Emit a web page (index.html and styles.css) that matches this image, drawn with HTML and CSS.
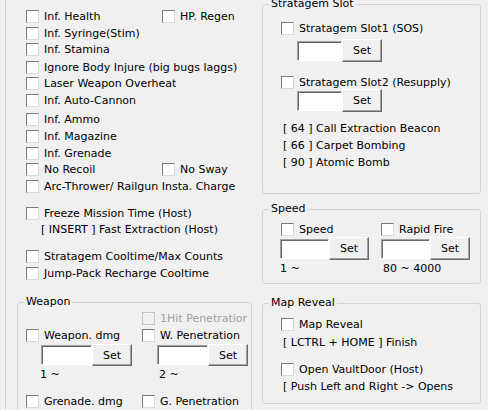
FILE: index.html
```html
<!DOCTYPE html>
<html>
<head>
<meta charset="utf-8">
<link rel="stylesheet" href="styles.css">
</head>
<body>
<div class="dialog">
  <div class="left">
    <div class="rows">
      <div class="row two"><label class="cb"><span class="box"></span>Inf. Health</label><label class="cb"><span class="box"></span>HP. Regen</label></div>
      <div class="row"><label class="cb"><span class="box"></span>Inf. Syringe(Stim)</label></div>
      <div class="row m-1"><label class="cb"><span class="box"></span>Inf. Stamina</label></div>
      <div class="row m1"><label class="cb"><span class="box"></span>Ignore Body Injure (big bugs laggs)</label></div>
      <div class="row m-1"><label class="cb"><span class="box"></span>Laser Weapon Overheat</label></div>
      <div class="row"><label class="cb"><span class="box"></span>Inf. Auto-Cannon</label></div>
      <div class="row m2"><label class="cb"><span class="box"></span>Inf. Ammo</label></div>
      <div class="row"><label class="cb"><span class="box"></span>Inf. Magazine</label></div>
      <div class="row"><label class="cb"><span class="box"></span>Inf. Grenade</label></div>
      <div class="row m-1 two"><label class="cb"><span class="box"></span>No Recoil</label><label class="cb"><span class="box"></span>No Sway</label></div>
      <div class="row"><label class="cb"><span class="box"></span>Arc-Thrower/ Railgun Insta. Charge</label></div>
      <div class="row m10"><label class="cb"><span class="box"></span>Freeze Mission Time (Host)</label></div>
      <div class="row m-1 note-l">[ INSERT ] Fast Extraction (Host)</div>
      <div class="row m10"><label class="cb"><span class="box"></span>Stratagem Cooltime/Max Counts</label></div>
      <div class="row"><label class="cb"><span class="box"></span>Jump-Pack Recharge Cooltime</label></div>
    </div>
    <div class="group weapon">
      <span class="gtitle">Weapon</span>
      <div class="row two"><span class="cell"></span><label class="cb dis clip105"><span class="box"></span>1Hit Penetration</label></div>
      <div class="row two"><label class="cb"><span class="box"></span>Weapon. dmg</label><label class="cb clip100"><span class="box"></span>W. Penetration</label></div>
      <div class="erow two">
        <span class="cell ecell"><span class="edit w51"></span><span class="btn h22">Set</span></span>
        <span class="cell ecell"><span class="edit w51"></span><span class="btn h22">Set</span></span>
      </div>
      <div class="row two"><span class="cell hint1">1 ~</span><span class="cell hint2">2 ~</span></div>
      <div class="row m10 two"><label class="cb"><span class="box"></span>Grenade. dmg</label><label class="cb"><span class="box"></span>G. Penetration</label></div>
    </div>
  </div>

  <div class="right">
    <div class="group strat">
      <span class="gtitle">Stratagem Slot</span>
      <div class="row"><label class="cb"><span class="box"></span>Stratagem Slot1 (SOS)</label></div>
      <div class="erow s-e1"><span class="edit w45"></span><span class="btn">Set</span></div>
      <div class="row s-c2"><label class="cb"><span class="box"></span>Stratagem Slot2 (Resupply)</label></div>
      <div class="erow s-e2"><span class="edit w45"></span><span class="btn">Set</span></div>
      <div class="row s-t1 note">[ 64 ] Call Extraction Beacon</div>
      <div class="row note">[ 66 ] Carpet Bombing</div>
      <div class="row note">[ 90 ] Atomic Bomb</div>
    </div>

    <div class="group speed">
      <span class="gtitle">Speed</span>
      <div class="row"><label class="cb sp1"><span class="box"></span>Speed</label><label class="cb"><span class="box"></span>Rapid Fire</label></div>
      <div class="erow sp-e"><span class="sp1 ecell"><span class="edit w49"></span><span class="btn">Set</span></span><span class="ecell"><span class="edit w49"></span><span class="btn">Set</span></span></div>
      <div class="trow"><span class="sp1">1 ~</span><span class="hint3">80 ~ 4000</span></div>
    </div>

    <div class="group map">
      <span class="gtitle">Map Reveal</span>
      <div class="row"><label class="cb"><span class="box"></span>Map Reveal</label></div>
      <div class="row m1 note">[ LCTRL + HOME ] Finish</div>
      <div class="row m10"><label class="cb"><span class="box"></span>Open VaultDoor (Host)</label></div>
      <div class="row note">[ Push Left and Right -&gt; Opens</div>
    </div>
  </div>
</div>
</body>
</html>
```

FILE: styles.css
```css
html, body {
  margin: 0;
  padding: 0;
  background: #f0f0f0;
}
body {
  font-family: "DejaVu Sans", "Noto Sans", sans-serif;
  font-size: 11px;
  line-height: 13px;
  color: #000;
  width: 488px;
  height: 410px;
  overflow: hidden;
}
.dialog {
  display: flex;
  height: 410px;
}
.left {
  flex: none;
  box-sizing: border-box;
  width: 251px;
  margin-left: 5px;
  border-left: 1px solid #d5d5d5;
  padding: 8px 0 0 11px;
}
.rows {
  padding-left: 9px;
}
.row {
  display: flex;
  align-items: center;
  height: 17px;
  white-space: nowrap;
}
.m-1 { margin-top: -1px; }
.m1 { margin-top: 1px; }
.m2 { margin-top: 2px; }
.m10 { margin-top: 10px; }
.two > :first-child {
  flex: none;
  width: 116px;
}
.rows .two > :first-child {
  width: 136px;
}
.cb {
  display: flex;
  align-items: center;
  white-space: nowrap;
  overflow: hidden;
}
.box {
  flex: none;
  box-sizing: border-box;
  width: 13px;
  height: 13px;
  margin-right: 5px;
  background: #fff;
  border: 1px solid;
  border-color: #7a7a7a #dadada #dadada #7a7a7a;
}
.dis {
  color: #a0a0a0;
}
.dis .box {
  background: #f0f0f0;
  border-color: #c4c4c4;
}
.clip100 { width: 100px; }
.clip105 { width: 105px; }
.note-l {
  padding-left: 15px;
}
.note {
  padding-left: 2px;
}

.group {
  position: relative;
  box-sizing: border-box;
  border: 1px solid #d5d5d5;
  border-radius: 3px;
}
.gtitle {
  position: absolute;
  top: -8px;
  left: 6px;
  padding: 0 2px;
  background: #f0f0f0;
  white-space: nowrap;
}

.weapon {
  width: 235px;
  height: 130px;
  margin-top: 20px;
  padding: 7px 0 0 8px;
}
.erow {
  display: flex;
  align-items: center;
  height: 23px;
}
.weapon .erow {
  height: 22px;
}
.ecell {
  display: flex;
  align-items: center;
}
.weapon .ecell {
  padding-left: 15px;
  box-sizing: border-box;
}
.hint1 { padding-left: 14px; box-sizing: border-box; }
.hint2 { padding-left: 17px; }
.edit {
  flex: none;
  box-sizing: border-box;
  height: 20px;
  background: #fff;
  border: 1px solid;
  border-color: #a0a0a0 #fff #fff #a0a0a0;
  box-shadow: inset 1px 1px #696969;
}
.w45 { width: 45px; }
.w49 { width: 49px; }
.w51 { width: 51px; }
.btn {
  flex: none;
  box-sizing: border-box;
  width: 40px;
  height: 23px;
  display: flex;
  align-items: center;
  justify-content: center;
  background: #f0f0f0;
  border: 1px solid;
  border-color: #fff #696969 #696969 #fff;
  box-shadow: inset -1px -1px #a0a0a0;
}
.btn.h22 { height: 22px; }

.right {
  flex: none;
  width: 219px;
  margin-left: 6px;
}
.strat {
  height: 190px;
  margin-top: 4px;
  padding: 15px 0 0 18px;
}
.s-e1 { margin-top: 2px; padding-left: 16px; }
.s-c2 { margin-top: 12px; }
.s-e2 { margin-top: -2px; padding-left: 16px; }
.s-t1 { margin-top: 8px; }

.speed {
  height: 75px;
  margin-top: 15px;
  padding: 11px 0 0 17px;
}
.sp1 {
  flex: none;
  width: 101px;
  box-sizing: border-box;
}
.speed .row .sp1 { padding-left: 1px; }
.sp-e { margin-top: -1px; }
.trow {
  display: flex;
  margin-top: 2px;
  height: 13px;
  white-space: nowrap;
}
.hint3 { padding-left: 2px; }

.map {
  height: 101px;
  margin-top: 19px;
  padding: 12px 0 0 18px;
}
```
